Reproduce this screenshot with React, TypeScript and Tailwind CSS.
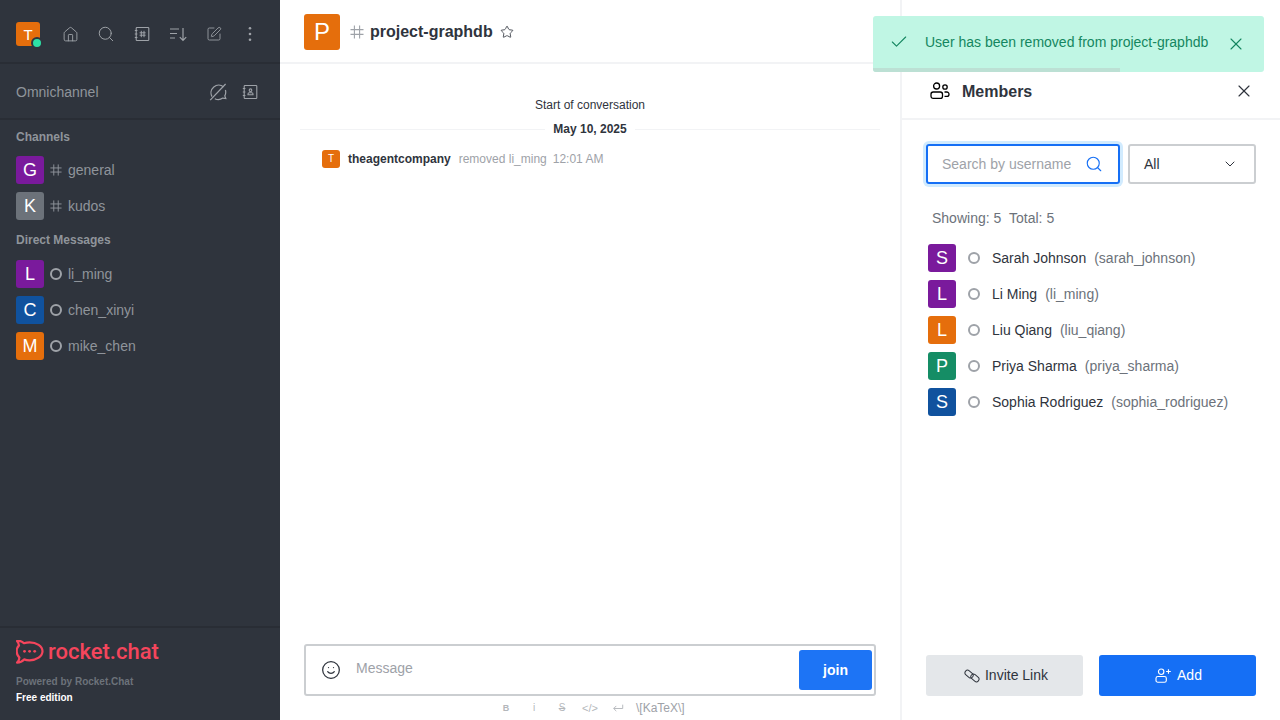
import React from 'react';
import { ChevronDown, House, Search, SquarePen, Star, X, Check, Smile } from 'lucide-react';

const HashIcon = ({ className = '' }: { className?: string }) => (
  <svg viewBox="0 0 14 14" className={className} fill="none" stroke="currentColor" strokeWidth="1.1">
    <path d="M4.4 .5v13M9.6 .5v13M.5 4.600h13M.5 9.400h13" />
  </svg>
);

const DirectoryIcon = () => (
  <svg viewBox="0 0 16 16" className="w-[16px] h-[16px]" fill="none" stroke="currentColor" strokeWidth="1.1">
    <rect x="2.200" y="1.500" width="12.600" height="13" rx="0.800" />
    <path d="M.8 4.500h2.600M.8 8h2.600M.8 11.500h2.600" />
    <path d="M7.300 4.800v6.400M10 4.800v6.400M5.600 6.800h6M5.600 9.200h6" strokeWidth="1" />
  </svg>
);

const SortIcon = () => (
  <svg viewBox="0 0 18 16" className="w-[18px] h-[16px]" fill="none" stroke="currentColor" strokeWidth="1.2">
    <path d="M1 3h9M1 7.500h7M1 12h5M14 2v12.500M10.800 11.200l3.200 3.300 3.200-3.300" />
  </svg>
);

const KebabIcon = () => (
  <svg viewBox="0 0 4 16" className="w-[4px] h-[16px]" fill="currentColor">
    <circle cx="2" cy="2.200" r="1.300" />
    <circle cx="2" cy="8" r="1.300" />
    <circle cx="2" cy="13.800" r="1.300" />
  </svg>
);

const ChatOffIcon = () => (
  <svg viewBox="0 0 18 18" className="w-[18px] h-[18px]" fill="none" stroke="currentColor" strokeWidth="1.2">
    <path d="M14.600 3.900A7.700 7.700 0 0 0 3 13.600M16.400 7a7.700 7.700 0 0 1-.6 5.900l1 2.600-3-.4a7.700 7.700 0 0 1-8 .6" />
    <path d="M16.600 1 1.200 17.200" />
  </svg>
);

const ContactIcon = () => (
  <svg viewBox="0 0 16 16" className="w-[16px] h-[16px]" fill="none" stroke="currentColor" strokeWidth="1.1">
    <rect x="2.200" y="1.500" width="12.600" height="13" rx="0.800" />
    <path d="M.8 4.500h2.600M.8 8h2.600M.8 11.500h2.600" />
    <circle cx="8.500" cy="6.200" r="1.300" />
    <path d="M6 10.800V10c0-.7.500-1.200 1.200-1.200h2.600c.7 0 1.200.500 1.200 1.200v.8z" />
  </svg>
);

const MembersIcon = () => (
  <svg viewBox="0 0 20 18" className="w-[20px] h-[18px]" fill="none" stroke="currentColor" strokeWidth="1.300">
    <circle cx="6.600" cy="4" r="3" />
    <circle cx="15" cy="5" r="2.200" />
    <rect x="1" y="10" width="11.500" height="6.400" rx="2.200" />
    <path d="M14.500 10h2.300a2.200 2.200 0 0 1 2.200 2.200 2.200 2.200 0 0 1-2.200 2.200h-2.300" />
  </svg>
);

const AddUserIcon = () => (
  <svg viewBox="0 0 18 16" className="w-[17px] h-[15px]" fill="none" stroke="currentColor" strokeWidth="1.200">
    <circle cx="6.500" cy="4" r="2.900" />
    <rect x="1" y="9" width="11" height="6.200" rx="2" />
    <path d="M14.300 1.200v5M11.800 3.700h5" />
  </svg>
);

const ChainIcon = () => (
  <svg viewBox="0 0 16 16" className="w-[16px] h-[16px]" fill="none" stroke="currentColor" strokeWidth="1">
    <rect x="0.600" y="3.400" width="9" height="5.200" rx="2.600" transform="rotate(40 5 6)" />
    <rect x="6.400" y="7.400" width="9" height="5.200" rx="2.600" transform="rotate(40 11 10)" />
  </svg>
);

const RocketLogo = () => (
  <svg viewBox="0 0 28 25" className="w-[28px] h-[25px]" fill="none">
    <path
      d="M1 1c2.500-.4 5.300.5 7 2.200 1.800-.6 3.700-.9 5.600-.9C20.500 2.300 26.500 6.300 26.500 11.300s-6 9-12.900 9c-1.900 0-3.800-.3-5.500-.9-1.600 1.800-4.200 3.100-7 3.200 1.300-1.300 2.200-3.100 2.300-5C1.500 15.800.7 13.600.7 11.300c0-2.200.8-4.400 2.300-5.900C2.800 3.800 2.200 2.200 1 1z"
      stroke="#f5455c"
      strokeWidth="2.200"
      strokeLinejoin="round"
    />
    <circle cx="8.500" cy="11.300" r="1.400" fill="#f5455c" />
    <circle cx="13.600" cy="11.300" r="1.400" fill="#f5455c" />
    <circle cx="18.700" cy="11.300" r="1.400" fill="#f5455c" />
  </svg>
);

const Avatar = ({ letter, color, size = 'w-[28px] h-[28px] text-[18px]' }: { letter: string; color: string; size?: string }) => (
  <div className={`${size} ${color} rounded-[3px] flex items-center justify-center text-white shrink-0 leading-none`}>
    {letter}
  </div>
);

const StatusRing = ({ className }: { className: string }) => (
  <div className={`w-[12px] h-[12px] rounded-full border-2 ${className} shrink-0`} />
);

const channels = [
  { letter: 'G', color: 'bg-[#7a1a9c]', name: 'general' },
  { letter: 'K', color: 'bg-[#6c727a]', name: 'kudos' },
];

const directs = [
  { letter: 'L', color: 'bg-[#7a1a9c]', name: 'li_ming' },
  { letter: 'C', color: 'bg-[#10529e]', name: 'chen_xinyi' },
  { letter: 'M', color: 'bg-[#e56e0c]', name: 'mike_chen' },
];

const members = [
  { letter: 'S', color: 'bg-[#7a1a9c]', name: 'Sarah Johnson', user: 'sarah_johnson' },
  { letter: 'L', color: 'bg-[#7a1a9c]', name: 'Li Ming', user: 'li_ming' },
  { letter: 'L', color: 'bg-[#e56e0c]', name: 'Liu Qiang', user: 'liu_qiang' },
  { letter: 'P', color: 'bg-[#158d65]', name: 'Priya Sharma', user: 'priya_sharma' },
  { letter: 'S', color: 'bg-[#10529e]', name: 'Sophia Rodriguez', user: 'sophia_rodriguez' },
];

const SidebarRow = ({ letter, color, name, hash }: { letter: string; color: string; name: string; hash?: boolean }) => (
  <div className="h-[36px] flex items-center pl-[16px]">
    <Avatar letter={letter} color={color} />
    <div className="w-[24px] flex justify-center">
      {hash ? <HashIcon className="w-[12px] h-[12px] text-[#8f949b]" /> : <StatusRing className="border-[#9ea2a8]" />}
    </div>
    <span className="text-[14px] text-[#8f949b]">{name}</span>
  </div>
);

const Sidebar = () => (
  <aside className="w-[280px] h-full bg-[#2f343d] flex flex-col shrink-0">
    <div className="h-[64px] flex items-center justify-between pl-[16px] pr-[12px] pt-[6px] border-b-2 border-[#292d35] text-[#9ea2a8]">
      <div className="relative">
        <Avatar letter="T" color="bg-[#e56e0c]" size="w-[24px] h-[24px] text-[15px]" />
        <div className="absolute right-[-3px] bottom-[-3px] w-[12px] h-[12px] rounded-full bg-[#2de0a5] border-2 border-[#2f343d]" />
      </div>
      <div className="flex items-center">
        <button className="w-[36px] flex justify-center"><House size={17} strokeWidth={1.3} /></button>
        <button className="w-[36px] flex justify-center"><Search size={18} strokeWidth={1.3} /></button>
        <button className="w-[36px] flex justify-center"><DirectoryIcon /></button>
        <button className="w-[36px] flex justify-center"><SortIcon /></button>
        <button className="w-[36px] flex justify-center"><SquarePen size={16} strokeWidth={1.3} /></button>
        <button className="w-[36px] flex justify-center"><KebabIcon /></button>
      </div>
    </div>
    <div className="h-[56px] flex items-center justify-between pl-[16px] pr-[22px] pt-[2px] border-b-2 border-[#292d35] text-[#9ea2a8]">
      <span className="text-[14px] text-[#8f949b]">Omnichannel</span>
      <div className="flex items-center gap-[15px]">
        <ChatOffIcon />
        <ContactIcon />
      </div>
    </div>
    <div className="text-[12px] font-bold text-[#8f949b] pl-[16px] mt-[9px] h-[16px] leading-[16px]">Channels</div>
    <div className="mt-[7px]">
      {channels.map((c) => (
        <SidebarRow key={c.name} {...c} hash />
      ))}
    </div>
    <div className="text-[12px] font-bold text-[#8f949b] pl-[16px] mt-[8px] h-[16px] leading-[16px]">Direct Messages</div>
    <div className="mt-[8px]">
      {directs.map((d) => (
        <SidebarRow key={d.name} {...d} />
      ))}
    </div>
    <div className="mt-auto h-[94px] border-t-2 border-[#292d35] pl-[16px] pt-[11px]">
      <div className="flex items-center gap-[4px] h-[26px]">
        <RocketLogo />
        <span className="text-[22px] leading-none font-medium text-[#f5455c] font-['Roboto',sans-serif]">rocket.chat</span>
      </div>
      <div className="text-[10px] font-bold text-[#6c727a] mt-[9px] leading-[16px]">Powered by Rocket.Chat</div>
      <div className="text-[10px] font-bold text-white leading-[16px]">Free edition</div>
    </div>
  </aside>
);

const MainColumn = () => (
  <main className="flex-1 h-full flex flex-col">
    <header className="h-[64px] shrink-0 pt-[2px] border-b-2 border-[#f2f3f5] flex items-center pl-[24px]">
      <Avatar letter="P" color="bg-[#e56e0c]" size="w-[36px] h-[36px] text-[24px]" />
      <HashIcon className="w-[14px] h-[14px] ml-[10px] text-[#9ea2a8]" />
      <span className="text-[16px] font-bold text-[#2f343d] ml-[6px]">project-graphdb</span>
      <Star size={14} strokeWidth={1.4} className="ml-[7px] text-[#2f343d]" />
    </header>
    <div className="flex-1 min-h-0 px-[20px] pt-[32px]">
      <div className="text-[12px] leading-[18px] text-[#2f343d] text-center">Start of conversation</div>
      <div className="flex items-center mt-[6px] h-[18px]">
        <div className="flex-1 h-px bg-[#f2f3f5]" />
        <span className="px-[8px] text-[12px] font-bold text-[#2f343d]">May 10, 2025</span>
        <div className="flex-1 h-px bg-[#f2f3f5]" />
      </div>
      <div className="flex items-center mt-[12px] pl-[22px] text-[12px]">
        <Avatar letter="T" color="bg-[#e56e0c]" size="w-[18px] h-[18px] text-[10px]" />
        <span className="ml-[8px] font-bold text-[#2f343d]">theagentcompany</span>
        <span className="ml-[8px] text-[#9ea2a8]">removed li_ming</span>
        <span className="ml-[6px] text-[#9ea2a8]">12:01 AM</span>
      </div>
    </div>
    <div className="px-[24px] shrink-0">
      <div className="h-[52px] border-2 border-[#cbced1] rounded-[3px] flex items-center pl-[15px] pr-[2px]">
        <Smile size={20} strokeWidth={1.5} className="text-[#2f343d]" />
        <span className="ml-[15px] text-[14px] text-[#9ea2a8] -mt-[4px]">Message</span>
        <button className="ml-auto w-[73px] h-[40px] bg-[#1d74f5] rounded-[3px] text-white text-[14px] font-bold">join</button>
      </div>
    </div>
    <div className="h-[24px] shrink-0 flex items-center pl-[212px] text-[#b4b7bb]">
      <span className="w-[28px] text-center text-[9px] font-bold leading-none">B</span>
      <span className="w-[28px] text-center text-[10px] leading-none">i</span>
      <span className="w-[28px] text-center text-[10px] line-through leading-none">S</span>
      <span className="w-[28px] text-center text-[11px] leading-none">&lt;/&gt;</span>
      <div className="w-[28px] flex justify-center">
        <svg viewBox="0 0 14 12" className="w-[12px] h-[11px]" fill="none" stroke="currentColor" strokeWidth="1.100">
          <path d="M12.500 1.500v4.500H2M5 3 2 6l3 3" />
        </svg>
      </div>
      <span className="ml-[4px] text-[12px] text-[#9ea2a8]">\[KaTeX\]</span>
    </div>
  </main>
);

const MembersPanel = () => (
  <section className="w-[380px] h-full border-l-2 border-[#f2f3f5] flex flex-col shrink-0 pt-[64px]">
    <div className="h-[56px] border-b-2 border-[#f2f3f5] flex items-center pl-[28px] pr-[26px]">
      <MembersIcon />
      <span className="ml-[12px] mt-[2px] text-[16px] font-bold text-[#2f343d]">Members</span>
      <X size={20} strokeWidth={1.4} className="ml-auto text-[#2f343d]" />
    </div>
    <div className="flex gap-[8px] pl-[24px] pr-[24px] pt-[24px]">
      <div className="w-[194px] h-[40px] rounded-[3px] border-2 border-[#156ff5] ring-[3px] ring-[#d1ebfe] flex items-center pl-[14px] pr-[15px]">
        <span className="text-[14px] text-[#9ea2a8]">Search by username</span>
        <Search size={18} strokeWidth={1.5} className="ml-auto text-[#156ff5] shrink-0" />
      </div>
      <div className="w-[128px] h-[40px] rounded-[3px] border-2 border-[#cbced1] flex items-center pl-[14px] pr-[16px]">
        <span className="text-[14px] text-[#2f343d]">All</span>
        <ChevronDown size={16} strokeWidth={1.5} className="ml-auto text-[#2f343d]" />
      </div>
    </div>
    <div className="pl-[30px] mt-[24px] text-[14px] leading-[20px] text-[#6c727a]">
      Showing: 5&nbsp;&nbsp;Total: 5
    </div>
    <div className="mt-[12px] pl-[26px]">
      {members.map((m) => (
        <div key={m.user} className="h-[36px] flex items-center">
          <Avatar letter={m.letter} color={m.color} />
          <StatusRing className="border-[#9ea2a8] ml-[12px]" />
          <span className="ml-[12px] text-[14px] text-[#2f343d]">{m.name}</span>
          <span className="ml-[8px] text-[14px] text-[#6c727a]">({m.user})</span>
        </div>
      ))}
    </div>
    <div className="mt-auto flex gap-[16px] pl-[24px] pb-[24px]">
      <button className="w-[157px] h-[41px] rounded-[3px] bg-[#e4e7ea] flex items-center justify-center gap-[5px] pl-[3px] text-[14px] text-[#2f343d]">
        <ChainIcon />
        Invite Link
      </button>
      <button className="w-[157px] h-[41px] rounded-[3px] bg-[#156ff5] flex items-center justify-center gap-[5px] pl-[2px] text-[14px] text-white">
        <AddUserIcon />
        Add
      </button>
    </div>
  </section>
);

const Toast = () => (
  <div className="absolute left-[873px] top-[16px] w-[391px] h-[56px] rounded-[3px] overflow-hidden bg-[#c0f6e4] flex items-center text-[#148660]">
    <Check size={20} strokeWidth={1.3} className="ml-[16px] -mt-[4px]" />
    <span className="ml-[16px] text-[14px] -mt-[4px]">User has been removed from project-graphdb</span>
    <X size={20} strokeWidth={1.3} className="ml-auto mr-[18px]" />
    <div className="absolute left-0 bottom-0 w-[247px] h-[4px] bg-[#bce0d4]" />
  </div>
);

export default function App() {
  return (
    <div className="relative w-[1280px] h-[720px] overflow-hidden bg-white flex font-['Liberation_Sans',sans-serif]">
      <Sidebar />
      <MainColumn />
      <MembersPanel />
      <Toast />
    </div>
  );
}
